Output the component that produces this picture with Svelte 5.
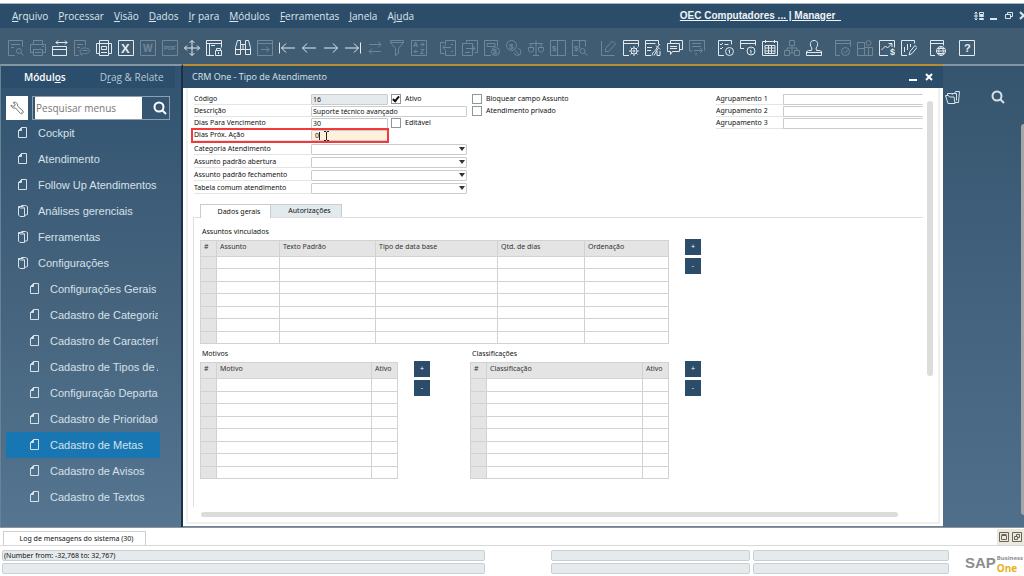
<script lang="ts">
  type Glyph = { d?: string; t?: [number, number, number, string][]; off?: boolean };

  const menus = [
    ["", "A", "rquivo"],
    ["", "P", "rocessar"],
    ["", "V", "isão"],
    ["", "D", "ados"],
    ["", "I", "r para"],
    ["", "M", "ódulos"],
    ["", "F", "erramentas"],
    ["", "J", "anela"],
    ["Aj", "u", "da"],
  ];

  // toolbar glyphs on a 16x16 grid, grouped as in the bar
  const toolbar: Glyph[][] = [
    [
      { off: true, d: "M7 15.5H.5V.5h14v6M3 4.5h9M3 7.5h3M13.5 11a2.5 2.5 0 1 1-5 0 2.5 2.5 0 0 1 5 0M13 13l2.5 2.5" },
      { off: true, d: "M3.5 4.5v-4h9v4M3.5 12.5h-3v-8h15v8h-3M3.5 9.5h9v6h-9zM5 12.5h6M12 6.5h2" },
      { d: "M.5 6.5h14v9H.5zM.5 9.5h14M4 2.5h11M6 .5l-2 2 2 2M13 .5l2 2-2 2" },
      { off: true, d: "M5 15.5H.5V.5h11v5M3 4.5h6M3 7.5h3M6 11c0-4 9-4 9.5-.5 0 3-4 3.5-6 3L7 15v-2.5C6.5 12 6 12 6 11M8.5 10.5h5" },
      { d: "M3.5 3.5v-3h9v3M3.5 13.5h-3v-10h3M12.5 3.5h3v10h-3M3.5 3.5h9v12h-9zM5.5 6.5h5v3h-5zM5 12.5h6" },
      { d: "M.5.5h15v15H.5z", t: [[3, 13, 13, "X"]] },
      { off: true, d: "M.5.5h15v15H.5z", t: [[3, 12, 10, "W"]] },
      { off: true, d: "M.5.5h15v15H.5z", t: [[2, 10, 6, "PDF"]] },
      { d: "M8 .5v15M.5 8h15M5.5 3L8 .5 10.5 3M5.5 13L8 15.5l2.5-2.5M3 5.5L.5 8 3 10.5M13 5.5L15.5 8 13 10.5" },
      { d: "M8 15.5H.5V.5h15v7M.5 3.5h15M3.5 3.5v12M5 5.5h4M10.5 10.5V8.5h4v2M9.5 10.5h6v5h-6zM12.5 12v2" },
    ],
    [
      { d: "M.5 14.5v-7l2-7h3v4h5v-4h3l2 7v7h-5v-5h-5v5zM.5 9.5h5M10.5 9.5h5M5.5 4.5v5M10.5 4.5v5M8 5v4" },
      { off: true, d: "M.5.5h15v15H.5zM.5 3.5h15M4 9.5h8M9.5 7L12 9.5 9.5 12" },
      { d: "M.5 2.5v11M2.5 8H16M7 3.5L2.5 8 7 12.5" },
      { d: "M1.5 8H15M6 3.5L1.5 8 6 12.5" },
      { d: "M1 8h13.5M10 3.5L14.5 8 10 12.5" },
      { d: "M15.5 2.5v11M0 8h13.5M9 3.5L13.5 8 9 12.5" },
      { off: true, d: "M2 4.5h12M11 1.5l3 3-3 3M14 11.5H2M5 8.5l-3 3 3 3" },
      { off: true, d: "M1.5.5h13v2l-5 6v5l-3 2v-7l-5-6zM1.5 2.5h13" },
      { off: true, d: "M.5.5h15v15H.5zM9 4.5h4M11 2.5l2 2-2 2M3 11.5h4M5 9.5l-2 2 2 2", t: [[2, 7, 7, "A"], [9, 14, 7, "Z"]] },
    ],
    [
      { off: true, d: "M4.5 13.5h-4V2.5h4M5.5 4.5v-4h10v15h-10v-5M3 7.5h8M5.5 5L3 7.5 5.5 10M11 4.5h2M11 11.5h2" },
      { off: true, d: "M4.5 2.5v-2h11v12h-3M.5 3.5h10v12H.5zM4 8.5h9M10.5 6L13 8.5 10.5 11M3 12.5h5" },
      { off: true, d: "M7 15.5H.5V.5h13v6M3 3.5h8v3H3zM15.5 11.5a4 4 0 1 1-8 0 4 4 0 0 1 8 0", t: [[9, 14, 7, "$"]] },
      { off: true, d: "M10.5 5.5a5 5 0 1 1-10 0 5 5 0 0 1 10 0M12 8.5a3.5 3.5 0 1 1-4 4M9 10l4 5", t: [[3, 9, 8, "$"]] },
      { off: true, d: "M8 .5v15M1 3.5h14M5 15.5h6M.5 7.5h5v3c0 2-5 2-5 0zM10.5 7.5h5v3c0 2-5 2-5 0zM3 3.5v4M13 3.5v4" },
      { off: true, d: "M.5.5h15v15H.5zM7.5.5v15", t: [[2, 11, 8, "$"]] },
      { off: true, d: "M6 15.5H.5V.5h13v6M7.5.5v8M13 11a2.5 2.5 0 1 1-5 0 2.5 2.5 0 0 1 5 0M12.5 13l3 2.5", t: [[2, 11, 8, "$"]] },
    ],
    [
      { off: true, d: "M.5 1v14.5h13M4.5 8.5v3h3l7-7.5-3-3z" },
      { d: "M6 15.5H.5V.5h15v6M.5 3.5h15M11 6v2M11 14v2M6 11h2M14 11h2M7.5 7.5l1.5 1.5M14.5 7.5l-1.5 1.5M7.5 14.5l1.5-1.5M14.5 14.5l-1.5-1.5M14 11a3 3 0 1 1-6 0 3 3 0 0 1 6 0M12 11a1 1 0 1 1-2 0 1 1 0 0 1 2 0" },
      { d: "M6 15.5H.5V.5h13v4M.5 3.5h10M2 7.5h5M2 10.5h4M7 15.5c0-4 4-4 5-8M9 15.5l4-7M12 7.5L15 4M11 5.5l4 4M12 11v4.5h3V11" },
      { d: "M3.5 3V.5h12v9H13M.5 3.5h12v8h-7l-2 3v-3h-3zM3 6.5h7M3 8.5h7" },
      { off: true, d: "M3.5 11H.5V.5h15v10M3 3.5h9M3 6.5h9M5 10.5h8M11 8l2.5 2.5L11 13M7 15.5v-3" },
    ],
    [
      { d: "M6 15.5H.5V.5h13v4M2 4l1 1 2-2M6.5 4.5h4M2 8l1 1 2-2M15.5 11.5a4 4 0 1 1-8 0 4 4 0 0 1 8 0M10.5 10.5h1v3M11.5 9v.5" },
      { d: "M4 8.5H.5v-8h15v5M.5 3.5h15M15 11a4 4 0 1 1-8 0 4 4 0 0 1 8 0M10 10.5h1v3M11 8.5v.5" },
      { d: "M.5 1.5h15v14H.5zM3.5 0v3M12.5 0v3M3 5.5h10v8H3zM3 8h10M3 11h10M6.5 5.5v8M9.5 5.5v8" },
      { off: true, d: "M5.5.5h5v5h-5zM.5 10.5h5v5h-5zM10.5 10.5h5v5h-5zM8 5.5v7M3 10.5v-2.5h10v2.5M5.5 13h5" },
      { d: "M8 .5c5 0 4 6 2 7.500l.5 2.500h3l2 1v4H.5v-4l2-1h3L6 8C4 6.500 3 .5 8 .5M.5 12.5h15" },
    ],
    [
      { off: true, d: "M5 15.5H.5V.5h15v6M.5 3.5h15M14.5 11.5a4 4 0 1 1-8 0 4 4 0 0 1 8 0M9 11.5l1.5 1.5 2-3" },
      { off: true, d: "M.5 2.5h7v13h-7zM7.5 7.5h8v8h-8zM.5 8.5h7M14 3a2.5 2.5 0 1 1-5 0 2.5 2.5 0 0 1 5 0M11.5 7.5v8" },
      { d: "M9 15.5H.5V.5h15v7M2.5 10l4-4 2 2 4-4M9.5 3.5h3.5v3.5", t: [[11, 15, 9, "$"]] },
      { d: "M6 15.5H.5V.5h13v3M3.5 12V7M6.5 10V4M9.5 7V4M8 15l1-3.5 5-6 2 2-5 6z" },
    ],
    [{ d: "M5 15.5H.5V.5h13v5M.5 3.5h13M15.5 11a4.5 4.5 0 1 1-9 0 4.5 4.5 0 0 1 9 0M6.5 11h9M11 6.5c-3 2-3 7 0 9M11 6.5c3 2 3 7 0 9M7.5 8.5h7M7.5 13.5h7" }],
    [{ d: "M.5.5h15v15H.5z", t: [[5, 12, 11, "?"]] }],
  ];

  const tree = [
    { label: "Cockpit", kind: "doc" },
    { label: "Atendimento", kind: "doc" },
    { label: "Follow Up Atendimentos", kind: "doc" },
    { label: "Análises gerenciais", kind: "folder" },
    { label: "Ferramentas", kind: "folder" },
    { label: "Configurações", kind: "folder" },
    { label: "Configurações Gerais", kind: "doc", child: true },
    { label: "Cadastro de Categorias", kind: "doc", child: true },
    { label: "Cadastro de Características", kind: "doc", child: true },
    { label: "Cadastro de Tipos de Atendimento", kind: "doc", child: true },
    { label: "Configuração Departamento", kind: "doc", child: true },
    { label: "Cadastro de Prioridades", kind: "doc", child: true },
    { label: "Cadastro de Metas", kind: "doc", child: true },
    { label: "Cadastro de Avisos", kind: "doc", child: true },
    { label: "Cadastro de Textos", kind: "doc", child: true },
  ];

  const combos = [
    "Categoria Atendimento",
    "Assunto padrão abertura",
    "Assunto padrão fechamento",
    "Tabela comum atendimento",
  ];

  let selected = $state("Cadastro de Metas");
  let search = $state("");
  let form = $state({
    codigo: "16",
    descricao: "Suporte técnico avançado",
    vencimento: "30",
    proxima: "0",
    ativo: true,
    editavel: false,
    bloquear: false,
    privado: false,
  });
</script>

{#snippet grid(cols: string[], kind: string, rows: number)}
  <div class="grid-box">
    <table class="grid {kind}">
      <colgroup>
        {#each cols as _}<col />{/each}
      </colgroup>
      <thead>
        <tr>{#each cols as c}<th>{c}</th>{/each}</tr>
      </thead>
      <tbody>
        {#each Array(rows) as _}
          <tr>{#each cols as _c}<td></td>{/each}</tr>
        {/each}
      </tbody>
    </table>
    <div class="grid-actions">
      <button aria-label="Adicionar linha">+</button>
      <button aria-label="Remover linha">-</button>
    </div>
  </div>
{/snippet}

{#snippet lens()}
  <svg width="14" height="14" viewBox="0 0 14 14" class="line thick">
    <circle cx="6" cy="6" r="4.5" /><path d="M9 9l4 4" />
  </svg>
{/snippet}

<div class="app">
  <header class="menubar">
    <nav>
      {#each menus as [pre, key, post]}
        <button>{pre}<u>{key}</u>{post}</button>
      {/each}
    </nav>
    <a class="company" href="#company">OEC Computadores ... | Manager&nbsp;&nbsp;</a>
    <div class="win-tools">
      <button aria-label="Layout">
        <svg width="10" height="10" viewBox="0 0 10 10" class="line"><path d="M2 1v8M.5 2.5L2 1l1.5 1.5M.5 7.5L2 9l1.5-1.5M0 5h4M5.5 1.5h4v2h-4zM5.5 4.5h4v1h-4zM5.5 7.5h4v1h-4z" /></svg>
      </button>
      <button aria-label="Minimizar">
        <svg width="10" height="10" viewBox="0 0 10 10" class="line thick"><path d="M1 8h7" /></svg>
      </button>
      <button aria-label="Restaurar">
        <svg width="10" height="10" viewBox="0 0 10 10" class="line"><path d="M1.5 3.5h5v4h-5zM3.5 3.5v-2h5v4h-2" /></svg>
      </button>
      <button aria-label="Fechar">
        <svg width="10" height="10" viewBox="0 0 10 10" class="line thick"><path d="M1 1l7 7M8 1L1 8" /></svg>
      </button>
    </div>
  </header>

  <div class="toolbar">
    {#each toolbar as group}
      <div class="tool-group">
        {#each group as g}
          <button class:off={g.off} aria-label="Ferramenta">
            <svg width="16" height="16" viewBox="0 0 16 16" class="line">
              <path d={g.d} />
              {#each g.t ?? [] as [x, y, size, s]}
                <text {x} {y} font-size={size}>{s}</text>
              {/each}
            </svg>
          </button>
        {/each}
      </div>
    {/each}
  </div>

  <main>
    <aside>
      <div class="side-tabs">
        <button class="on">Módul<u>o</u>s</button>
        <button>D<u>r</u>ag &amp; Relate</button>
      </div>
      <div class="side-search">
        <button class="wrench" aria-label="Configurar">
          <svg width="14" height="14" viewBox="0 0 14 14" class="line"><path d="M1 4l2 1.500L5 4.500 5 3 3 1.500C5.500.5 8 2 7.500 5l5.500 5c1 1.500-1 3.500-2.500 2.500l-5-5.500C3 7.500 1 6.500 1 4zM11 11l.5.5" /></svg>
        </button>
        <div class="search-box">
          <input aria-label="Pesquisar menus" placeholder="Pesquisar menus" bind:value={search} />
          <button aria-label="Pesquisar">{@render lens()}</button>
        </div>
      </div>
      <ul class="tree">
        {#each tree as item}
          <li>
            <button
              class:child={item.child}
              class:selected={item.label === selected}
              onclick={() => (selected = item.label)}
            >
              {#if item.kind === "folder"}
                <svg width="11" height="12" viewBox="0 0 11 12" class="line"><path d="M.5 1.5l1.5 1.5h4.5v8.5h-4.5L.5 10zM.5 1.5h4.5l1.5 1.5M3.5 1.5v-1h4l2 1v8l-3 1" /></svg>
              {:else}
                <svg width="11" height="12" viewBox="0 0 11 12" class="line"><path d="M3.5.5h5v10h-8v-7z" /><path d="M.5 3.5h3v-3z" fill="currentColor" /></svg>
              {/if}
              <span>{item.label}</span>
            </button>
          </li>
        {/each}
      </ul>
    </aside>

    <section class="window">
      <div class="titlebar">
        <h1>CRM One - Tipo de Atendimento</h1>
        <button aria-label="Minimizar janela">
          <svg width="10" height="10" viewBox="0 0 10 10" class="line thick"><path d="M0 8h8" /></svg>
        </button>
        <button aria-label="Fechar janela">
          <svg width="10" height="10" viewBox="0 0 10 10" class="line thick"><path d="M1 2l6 6M7 2L1 8" /></svg>
        </button>
      </div>

      <div class="body">
        <div class="content">
          <form>
            <div class="fields">
              <div class="row">
                <label for="codigo">Código</label>
                <input id="codigo" class="short readonly" readonly value={form.codigo} />
                <label class="check"><input type="checkbox" bind:checked={form.ativo} />Ativo</label>
              </div>
              <div class="row">
                <label for="descricao">Descrição</label>
                <input id="descricao" bind:value={form.descricao} />
              </div>
              <div class="row">
                <label for="vencimento">Dias Para Vencimento</label>
                <input id="vencimento" class="short" bind:value={form.vencimento} />
                <label class="check"><input type="checkbox" bind:checked={form.editavel} />Editável</label>
              </div>
              <div class="row active">
                <label for="proxima">Dias Próx. Ação</label>
                <input id="proxima" class="short" bind:value={form.proxima} />
                <svg class="cursor" width="14" height="12" viewBox="0 0 14 12"><path d="M2.5 2v8M7 1.5h2M10 1.5h2M9.5 2v8M7 10.5h2M10 10.5h2" /></svg>
              </div>
              <div class="combos">
                {#each combos as c, i}
                  <div class="row">
                    <label for="combo{i}">{c}</label>
                    <div class="combo">
                      <select id="combo{i}"><option value=""></option></select>
                      <svg width="6" height="4" viewBox="0 0 6 4"><path d="M0 0h6L3 4z" /></svg>
                    </div>
                  </div>
                {/each}
              </div>
            </div>
            <div class="flags">
              <label class="check"><input type="checkbox" bind:checked={form.bloquear} />Bloquear campo Assunto</label>
              <label class="check"><input type="checkbox" bind:checked={form.privado} />Atendimento privado</label>
            </div>
            <div class="groups">
              {#each [1, 2, 3] as n}
                <div class="row">
                  <label for="grupo{n}">Agrupamento {n}</label>
                  <input id="grupo{n}" />
                </div>
              {/each}
            </div>
          </form>

          <div class="tabs">
            <button class="on">Dados gerais</button>
            <button>Autorizações</button>
          </div>
          <div class="panel">
            <div>
              <h2>Assuntos vinculados</h2>
              {@render grid(["#", "Assunto", "Texto Padrão", "Tipo de data base", "Qtd. de dias", "Ordenação"], "subjects", 7)}
            </div>
            <div class="pair">
              <div>
                <h2>Motivos</h2>
                {@render grid(["#", "Motivo", "Ativo"], "reasons", 8)}
              </div>
              <div>
                <h2>Classificações</h2>
                {@render grid(["#", "Classificação", "Ativo"], "classes", 8)}
              </div>
            </div>
          </div>
          <div class="hscroll"></div>
        </div>
        <div class="vscroll"></div>
      </div>
    </section>

    <div class="desk">
      <div class="desk-tools">
        <button aria-label="Abrir">
          <svg width="15" height="13" viewBox="0 0 15 13" class="line"><path d="M.5 4.5h3l1 1.5h4.5l1 6.5h-7zM2.5 4.5v-2h4l1 1.5M6.5 2.5h3l1-2h4l-1 11h-3.5M9 2.5h2.5v7" /></svg>
        </button>
        <button aria-label="Localizar">{@render lens()}</button>
      </div>
      <div class="desk-scroll"></div>
    </div>
  </main>

  <footer>
    <div class="log">
      <button>Log de mensagens do sistema (30)</button>
      <div class="log-tools">
        <svg width="10" height="10" viewBox="0 0 10 10"><path d="M.5.5h9v9h-9zM2.5 3.5h5v4h-5zM2.5 2.5h5" /></svg>
        <svg width="10" height="10" viewBox="0 0 10 10"><path d="M.5.5h9v9h-9zM2.5 4.5h3v3h-3zM4.5 4.5v-2h3v3h-2" /></svg>
      </div>
    </div>
    <div class="status">
      <div class="cells">
        <span>(Number from: -32,768 to: 32,767)</span>
        <i></i><span></span><span></span>
        <span></span>
        <i></i><span></span><span></span>
      </div>
      <div class="brand">
        <b>SAP</b>
        <p><small>Business</small><strong>One</strong></p>
      </div>
    </div>
  </footer>
</div>

<style>
  :global(body) {
    margin: 0;
    background: #fff;
  }

  .app {
    --ui: "Open Sans", "Noto Sans", sans-serif;
    --small: "Noto Sans", "Open Sans", sans-serif;
    --navy: #2c4d69;
    --rule: #c9cccd;
    display: flex;
    flex-direction: column;
    min-height: 100vh;
    box-sizing: border-box;
    padding-top: 3px;
    overflow: hidden;
    font: 7px/10px var(--small);
    color: #111;
  }

  .app *,
  .app *::after {
    box-sizing: border-box;
  }

  button {
    display: flex;
    align-items: center;
    justify-content: center;
    margin: 0;
    padding: 0;
    border: 0;
    background: none;
    color: inherit;
    font: inherit;
    white-space: nowrap;
  }

  h1,
  h2,
  p,
  ul {
    margin: 0;
    padding: 0;
    font: inherit;
    list-style: none;
  }

  svg {
    flex: none;
  }

  .line {
    fill: none;
    stroke: currentColor;
  }

  .line.thick {
    stroke-width: 2;
  }

  .line text {
    fill: currentColor;
    stroke: none;
    font-family: "Liberation Sans", sans-serif;
    font-weight: bold;
  }

  /* menu bar */
  .menubar {
    display: flex;
    align-items: center;
    height: 25px;
    padding-left: 12px;
    border-top: 1px solid #a8b4be;
    background: var(--navy);
    color: #dbe5ec;
    font: 10px/14px var(--ui);
  }

  nav {
    display: flex;
    flex: 1;
    gap: 10px;
  }

  nav button {
    display: block;
  }

  .company {
    color: #eef3f6;
    font: bold 10px/14px "Liberation Sans", sans-serif;
  }

  .win-tools {
    display: flex;
    gap: 5px;
    width: 50px;
    margin-left: 133px;
  }

  /* toolbar */
  .toolbar {
    display: flex;
    gap: 13px;
    height: 36px;
    align-items: center;
    padding: 4px 8px 0;
    background: #3f5c73;
    color: #e2eaf0;
  }

  .tool-group {
    display: flex;
    gap: 6px;
  }

  .off {
    opacity: 0.3;
  }

  main {
    display: flex;
    flex: 1;
    background: linear-gradient(#35556f, #4f6f8b);
  }

  /* module tree */
  aside {
    width: 183px;
    flex: none;
    border-top: 2px solid #8496a4;
    border-left: 1px solid #6b8194;
    border-right: 2px solid #1c3148;
    background: linear-gradient(#315370, #45637d 50%, #557590);
    color: #d6e0e8;
  }

  .side-tabs {
    display: flex;
    gap: 34px;
    height: 22px;
    margin-right: 6px;
    padding-left: 23px;
    background: #2a4e6b;
    color: #b9c8d4;
    font: 10px/14px var(--ui);
  }

  .side-tabs button {
    display: block;
  }

  .side-tabs .on {
    color: #fff;
    font-weight: 600;
  }

  .side-search {
    display: flex;
    gap: 4px;
    height: 24px;
    margin: 8px 11px 0 5px;
  }

  .wrench {
    flex: none;
    width: 22px;
    background: #fff;
    color: #777;
  }

  .search-box {
    display: flex;
    flex: 1;
    min-width: 0;
    padding-left: 2px;
    border: 1px solid #8da0b0;
  }

  .search-box input {
    flex: 1;
    min-width: 0;
    padding: 0 1px;
    border: 0;
    background: #fff;
    font: 10px/14px var(--ui);
    outline: 0;
  }

  .search-box input::placeholder {
    color: #777;
    opacity: 1;
  }

  .search-box button {
    flex: none;
    width: 27px;
    padding-left: 8px;
    color: #fff;
  }

  .tree {
    margin: 0 21px 0 5px;
    font: 11px/14px "Liberation Sans", sans-serif;
  }

  .tree button {
    justify-content: flex-start;
    gap: 9px;
    width: 100%;
    height: 26px;
    padding: 0 2px 0 12px;
  }

  .tree .child {
    padding-left: 24px;
  }

  .tree span {
    overflow: hidden;
  }

  .tree .selected {
    background: #1877b2;
  }

  /* form window */
  .window {
    display: flex;
    flex: 1;
    flex-direction: column;
    min-width: 0;
    border-top: 2px solid #b98d33;
    border-bottom: 1px solid #6e8190;
    background: #fff;
  }

  .titlebar {
    display: flex;
    gap: 6px;
    align-items: center;
    height: 22px;
    padding: 0 8px 0 9px;
    background: var(--navy);
    color: #fff;
    font: 9px/14px var(--ui);
  }

  h1 {
    flex: 1;
    color: #d9e3ea;
  }

  .body {
    display: flex;
    flex: 1;
    gap: 4px;
    margin: 0 3px 2px;
    padding: 6px 5px 5px 5px;
    border: 2px solid #f0f0f0;
    border-top: 0;
  }

  .content {
    display: flex;
    flex: 1;
    flex-direction: column;
    min-width: 0;
  }

  .vscroll {
    width: 6px;
    height: 275px;
    margin-top: 7px;
    border-radius: 3px;
    background: #dcdcdc;
  }

  .hscroll {
    height: 5px;
    margin: 5px 25px 0 8px;
    border-radius: 3px;
    background: #dcdcdc;
  }

  form {
    display: flex;
    gap: 5px;
    padding-left: 1px;
  }

  .fields {
    width: 273px;
  }

  .row {
    position: relative;
    display: flex;
    height: 12px;
  }

  .row > label:first-child {
    width: 117px;
    height: 11px;
    border-bottom: 1px solid #e2e4e5;
    white-space: nowrap;
  }

  .row > input,
  select {
    flex: 1;
    min-width: 0;
    height: 11px;
    padding: 0 1px;
    border: 1px solid var(--rule);
    border-radius: 1px;
    background: #fff;
    color: #111;
    font: inherit;
    outline: 0;
  }

  .row > input.short {
    flex: none;
    width: 77px;
  }

  .row > input.readonly {
    background: #e5eaed;
  }

  .check {
    display: flex;
    gap: 4px;
    height: 12px;
    white-space: nowrap;
  }

  .row .check {
    margin-left: 3px;
  }

  .check input {
    appearance: none;
    width: 10px;
    height: 10px;
    margin: 0;
    border: 1px solid #8f979c;
    background: #fff;
  }

  .check input:checked::after {
    content: "";
    display: block;
    width: 4px;
    height: 7px;
    margin: 0 0 0 2px;
    border: solid #111;
    border-width: 0 2px 2px 0;
    transform: rotate(40deg);
  }

  .active > input.short {
    padding-left: 3px;
    background: #fdf1dc;
  }

  .active::after {
    content: "";
    position: absolute;
    z-index: 1;
    top: -2px;
    left: -3px;
    width: 198px;
    height: 15px;
    border: 2px solid #f23a3c;
    pointer-events: none;
  }

  .cursor {
    position: absolute;
    top: 0;
    left: 123px;
    fill: none;
    stroke: #222;
  }

  .combos {
    display: flex;
    flex-direction: column;
    gap: 2px;
    padding-top: 2px;
  }

  .combos .row {
    height: 11px;
  }

  .combo {
    position: relative;
    display: flex;
    flex: 1;
  }

  select {
    appearance: none;
  }

  .combo svg {
    position: absolute;
    top: 3px;
    right: 2px;
    fill: #333;
    pointer-events: none;
  }

  .groups {
    width: 207px;
    margin-left: auto;
  }

  .groups .row > label:first-child {
    width: 67px;
  }

  .groups .row > input {
    border-right: 0;
  }

  .tabs {
    display: flex;
    margin: 10px 0 0 7px;
  }

  .tabs button {
    width: 71px;
    height: 13px;
    padding-left: 7px;
    border: 1px solid var(--rule);
    border-left: 0;
    border-bottom: 0;
    background: #e3eaee;
  }

  .tabs .on {
    border-left: 1px solid var(--rule);
    margin-bottom: -1px;
    height: 14px;
    background: #fff;
    z-index: 1;
  }

  .panel {
    display: flex;
    flex: 1;
    flex-direction: column;
    gap: 5px;
    padding: 9px 0 0 6px;
    border-top: 1px solid #dedede;
    border-left: 1px solid #dedede;
  }

  h2 {
    margin: 0 0 3px 2px;
  }

  .pair {
    display: flex;
    gap: 40px;
  }

  .grid-box {
    display: flex;
    gap: 16px;
    align-items: flex-start;
  }

  .grid {
    table-layout: fixed;
    border-collapse: collapse;
  }

  .subjects {
    width: 469px;
    height: 104px;
  }

  .reasons {
    width: 198px;
    height: 117px;
  }

  .classes {
    width: 199px;
    height: 117px;
  }

  col:first-child {
    width: 16px;
  }

  .subjects col:nth-child(2) {
    width: 63px;
  }

  .subjects col:nth-child(3) {
    width: 96px;
  }

  .subjects col:nth-child(4) {
    width: 122px;
  }

  .subjects col:nth-child(5) {
    width: 87px;
  }

  .reasons col:last-child,
  .classes col:last-child {
    width: 26px;
  }

  th,
  td {
    padding: 0;
    border: 1px solid #d2d2d2;
  }

  th {
    height: 16px;
    padding: 0 0 3px 3px;
    background: #e4e4e4;
    color: #333;
    font-weight: normal;
    text-align: left;
    white-space: nowrap;
  }

  td:first-child {
    background: #e4e4e4;
  }

  .grid-actions {
    display: grid;
    gap: 3px;
    margin-top: -1px;
  }

  .grid-actions button {
    width: 16px;
    height: 16px;
    background: var(--navy);
    color: #fff;
  }

  /* area behind the window */
  .desk {
    display: flex;
    justify-content: space-between;
    width: 81px;
    border-top: 2px solid #8496a4;
  }

  .desk-tools {
    display: flex;
    gap: 31px;
    height: 14px;
    margin: 24px 0 0 2px;
    color: #d8e2e9;
  }

  .desk-scroll {
    width: 3px;
    margin: 58px 0 12px;
    border-radius: 3px 0 0 3px;
    background: #a3a6a8;
  }

  /* message log and status line */
  footer {
    border-top: 1px solid #8796a2;
    background: #fff;
  }

  .log {
    display: flex;
    justify-content: space-between;
    align-items: flex-end;
    height: 18px;
    padding-left: 3px;
    border-bottom: 1px solid #d8d8d8;
  }

  .log > button {
    width: 143px;
    height: 14px;
    padding-left: 4px;
    border: 1px solid #cfcfcf;
    border-bottom: 0;
  }

  .log-tools {
    display: flex;
    gap: 3px;
    align-items: center;
    height: 16px;
    padding: 0 2px;
    background: #ece9dc;
  }

  .log-tools svg {
    fill: none;
    stroke: #66665c;
  }

  .status {
    display: flex;
    gap: 16px;
    height: 30px;
    padding: 4px 1px 0 2px;
  }

  .cells {
    display: grid;
    flex: 1;
    grid-template-columns: 483fr 59fr 199fr 196fr;
    grid-auto-rows: 11px;
    gap: 2px 3px;
  }

  .cells span {
    min-width: 0;
    padding-left: 1px;
    border: 1px solid #c8cfd3;
    border-radius: 2px;
    background: #e5eaed;
    line-height: 9px;
    white-space: nowrap;
  }

  .brand {
    display: flex;
    gap: 1px;
    align-items: center;
    color: #8d8d8d;
    font-family: "Liberation Sans", sans-serif;
  }

  .brand b {
    font-size: 15px;
  }

  .brand small,
  .brand strong {
    display: block;
    font: bold 6px/9px var(--ui);
  }

  .brand strong {
    color: #eab11d;
    font: bold 10px/10px var(--ui);
  }
</style>
